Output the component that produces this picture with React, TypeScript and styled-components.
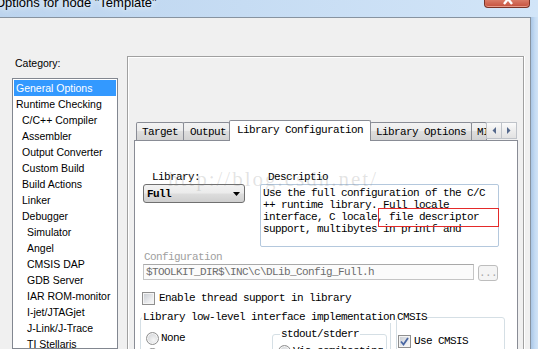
import React from "react";
import styled, { createGlobalStyle, css } from "styled-components";

const MONO = `"Liberation Mono", "DejaVu Sans Mono", monospace`;
const SANS = `"Liberation Sans", Arial, sans-serif`;
const SERIF = `"Liberation Serif", "Times New Roman", serif`;

const GlobalStyle = createGlobalStyle`
  html, body { margin: 0; padding: 0; overflow: hidden; }
  body { background: #c9def5; }
  *, *::before, *::after { box-sizing: border-box; }
`;

const Window = styled.div`
  width: 538px;
  height: 349px;
  overflow: hidden;
  display: flex;
  flex-direction: column;
  background: #c9def5;
`;

const TitleBar = styled.div`
  height: 17px;
  flex: none;
  display: flex;
  align-items: flex-start;
  overflow: hidden;
  background: linear-gradient(90deg, #bcd4ee 0%, #c6dcf3 45%, #d2e5f8 100%);
`;

const TitleText = styled.div`
  font-family: ${SANS};
  font-size: 13px;
  line-height: 15px;
  margin-top: -5px;
  margin-left: -5px;
  color: #000;
  white-space: nowrap;
  text-shadow: 0 0 5px #f4f9ff, 0 0 9px #e8f2fd;
`;

const CloseButton = styled.div`
  position: relative;
  margin-left: auto;
  margin-right: 8px;
  width: 46px;
  height: 8px;
  border: 1px solid #7a3226;
  border-top: none;
  border-radius: 0 0 4px 4px;
  background: linear-gradient(#d97a66, #c5503c);
  box-shadow: inset 0 -1px 0 #e89a88;
  overflow: hidden;
`;

const CloseGlyph = styled.svg`
  position: absolute;
  left: 18px;
  top: -7px;
`;

const Main = styled.div`
  flex: 1;
  display: flex;
  min-height: 0;
`;

const Dialog = styled.div`
  width: 531px;
  flex: none;
  display: flex;
  align-items: stretch;
  background: #f0f0f0;
  border-top: 1px solid #8793a0;
  border-right: 1px solid #8793a0;
  overflow: hidden;
`;

const FrameEdge = styled.div`
  flex: 1;
  background: linear-gradient(90deg, #a9c6e6, #c4dbf3 55%, #d0e3f7);
`;

const CategoryPane = styled.div`
  width: 118px;
  flex: none;
  padding: 39px 0 0 12px;
  display: flex;
  flex-direction: column;
`;

const CategoryLabel = styled.div`
  font-family: ${SANS};
  font-size: 10.5px;
  line-height: 13px;
  padding-left: 3px;
  color: #000;
`;

const ListBox = styled.div`
  margin-top: 8px;
  width: 106px;
  flex: 1;
  background: #fff;
  border: 1px solid #828790;
  padding: 1px;
  overflow: hidden;
`;

const ListItem = styled.div<{ $level: number; $selected?: boolean }>`
  height: 16px;
  line-height: 16px;
  font-family: ${SANS};
  font-size: 10.5px;
  white-space: nowrap;
  color: #000;
  padding-left: ${(p) => [2, 8, 13][p.$level]}px;
  ${(p) =>
    p.$selected &&
    css`
      background: #3399ff;
      color: #fff;
    `}
`;

const OptionsFrame = styled.div`
  margin: 38px 0 0 9px;
  width: 397px;
  flex: none;
  border: 1px solid #a0a0a0;
  border-bottom: none;
  box-shadow: inset 1px 1px 0 #fff, 1px 0 0 #fff;
  padding: 63px 5px 0 6px;
  display: flex;
  flex-direction: column;
`;

const TabStrip = styled.div`
  height: 20px;
  flex: none;
  display: flex;
  align-items: flex-end;
  padding-left: 2px;
  position: relative;
  z-index: 1;
`;

const Tab = styled.div<{ $active?: boolean; $w: number; $pad: number }>`
  width: ${(p) => p.$w}px;
  flex: none;
  margin-right: -1px;
  height: 18px;
  padding: 2px 0 0 ${(p) => p.$pad}px;
  font-family: ${MONO};
  font-size: 11px;
  letter-spacing: -0.6px;
  line-height: 15px;
  color: #000;
  white-space: nowrap;
  overflow: hidden;
  border: 1px solid #898c95;
  border-bottom: none;
  border-radius: 2px 2px 0 0;
  background: linear-gradient(#f3f3f3, #ececec 45%, #dedede 50%, #d2d2d2);
  ${(p) =>
    p.$active &&
    css`
      height: 21px;
      margin-bottom: -1px;
      background: #fff;
      position: relative;
      z-index: 2;
    `}
`;

const Scroller = styled.div`
  display: flex;
  height: 17px;
  margin-bottom: 1px;
  flex: none;
  position: relative;
  z-index: 3;
`;

const ScrollButton = styled.div`
  width: 16px;
  height: 17px;
  margin-right: -1px;
  border: 1px solid #bfc3c9;
  background: linear-gradient(#fbfbfb, #ededed 50%, #e2e2e2);
  display: flex;
  align-items: center;
  justify-content: center;
`;

const TabPanel = styled.div`
  flex: 1;
  position: relative;
  background: #fff;
  border: 1px solid #898c95;
  border-bottom: none;
  padding-top: 30px;
  display: flex;
  flex-direction: column;
  overflow: hidden;
`;

const MonoText = css`
  font-family: ${MONO};
  font-size: 11px;
  letter-spacing: -0.6px;
  color: #000;
  white-space: pre;
`;

const TopRow = styled.div`
  display: flex;
  margin-left: 8px;
`;

const LibraryCol = styled.div`
  width: 102px;
  flex: none;
  display: flex;
  flex-direction: column;
`;

const DescCol = styled.div`
  width: 239px;
  margin-left: 15px;
  flex: none;
  display: flex;
  flex-direction: column;
`;

const FieldLabel = styled.div<{ $indent: number; $disabled?: boolean }>`
  ${MonoText};
  line-height: 12px;
  padding-left: ${(p) => p.$indent}px;
  ${(p) =>
    p.$disabled &&
    css`
      color: #a0a0a0;
    `}
`;

const Combo = styled.div`
  ${MonoText};
  font-weight: bold;
  margin-top: 1px;
  height: 19px;
  line-height: 15px;
  padding: 2px 0 0 3px;
  border: 1px solid #707070;
  border-radius: 3px;
  background: linear-gradient(#f2f2f2, #ebebeb 48%, #dddddd 52%, #cfcfcf);
  display: flex;
  justify-content: space-between;
  align-items: flex-start;
`;

const ComboArrow = styled.svg`
  margin: 5px 4px 0 0;
`;

const DescBox = styled.div`
  ${MonoText};
  margin-top: 1px;
  height: 63px;
  line-height: 12px;
  padding: 2px 0 0 2px;
  border: 1px solid #b4c8dd;
  border-radius: 2px;
  background: #fff;
  overflow: hidden;
`;

const ConfigLabelRow = styled.div`
  margin-top: 4px;
`;

const ConfigRow = styled.div`
  display: flex;
  align-items: flex-start;
  margin: 1px 0 0 8px;
`;

const ConfigInput = styled.div`
  ${MonoText};
  color: #6d6d6d;
  width: 331px;
  height: 16px;
  line-height: 14px;
  padding-left: 2px;
  border: 1px solid #c5c5c5;
  border-top-color: #a9a9a9;
  background: #fbfbfb;
  overflow: hidden;
`;

const BrowseButton = styled.div`
  ${MonoText};
  color: #a8a8a8;
  margin: 1px 0 0 4px;
  width: 20px;
  height: 16px;
  line-height: 14px;
  text-align: center;
  border: 1px solid #bdbdbd;
  border-radius: 3px;
  background: #f4f4f4;
`;

const CheckRow = styled.div<{ $inset?: boolean }>`
  display: flex;
  align-items: center;
  gap: ${(p) => (p.$inset ? 3 : 4)}px;
  height: 13px;
  margin: ${(p) => (p.$inset ? "0" : "11px 0 0 7px")};
`;

const CheckBox = styled.div`
  width: 13px;
  height: 13px;
  flex: none;
  border: 1px solid #8f8f8f;
  box-shadow: inset 0 0 0 1px #f4f4f4;
  background: linear-gradient(135deg, #c6cad0, #eeeff1 70%, #f8f8f8);
  display: flex;
  align-items: center;
  justify-content: center;
`;

const OptionText = styled.span`
  ${MonoText};
  line-height: 13px;
`;

const GroupsRow = styled.div`
  display: flex;
  align-items: flex-start;
  margin: 6px 0 0 5px;
`;

const GroupBox = styled.fieldset<{ $w: number; $top?: number; $gap?: number }>`
  width: ${(p) => p.$w}px;
  min-width: 0;
  height: 70px;
  flex: none;
  margin: ${(p) => p.$top ?? 0}px 0 0 ${(p) => p.$gap ?? 0}px;
  padding: 0;
  border: 1px solid #d5dfe5;
  border-radius: 3px;
  display: flex;
  align-items: flex-start;
`;

const GroupLegend = styled.legend<{ $indent: number; $pad?: number }>`
  ${MonoText};
  line-height: 12px;
  padding: 0 ${(p) => p.$pad ?? 1}px;
  margin-left: ${(p) => p.$indent}px;
  background: #fff;
`;

const RadioColumn = styled.div<{ $w?: number; $pad: number; $top: number }>`
  width: ${(p) => (p.$w ? `${p.$w}px` : "auto")};
  flex: none;
  padding: ${(p) => p.$top}px 0 0 ${(p) => p.$pad}px;
  display: flex;
  flex-direction: column;
  gap: 3px;
`;

const RadioRow = styled.div`
  display: flex;
  align-items: center;
  gap: 2px;
  height: 13px;
`;

const Radio = styled.div`
  width: 13px;
  height: 13px;
  flex: none;
  border-radius: 50%;
  border: 1px solid #8f8f8f;
  box-shadow: inset 0 0 0 1px #f6f6f6;
  background: radial-gradient(circle at 60% 65%, #f6f6f6, #d7d9dc 70%);
`;

const CmsisBody = styled.div`
  padding: 12px 0 0 1px;
`;

const Watermark = styled.div`
  position: absolute;
  left: 33px;
  top: 28px;
  font-family: ${SERIF};
  font-size: 21px;
  line-height: 21px;
  letter-spacing: 2px;
  color: rgba(130, 130, 130, 0.22);
  white-space: nowrap;
  pointer-events: none;
  z-index: 5;
`;

const Annotation = styled.div`
  position: absolute;
  left: 243px;
  top: 67px;
  width: 121px;
  height: 19px;
  border: 1px solid #e42a2a;
  pointer-events: none;
  z-index: 6;
`;

const categories: Array<[string, number]> = [
  ["General Options", 0],
  ["Runtime Checking", 0],
  ["C/C++ Compiler", 1],
  ["Assembler", 1],
  ["Output Converter", 1],
  ["Custom Build", 1],
  ["Build Actions", 1],
  ["Linker", 1],
  ["Debugger", 1],
  ["Simulator", 2],
  ["Angel", 2],
  ["CMSIS DAP", 2],
  ["GDB Server", 2],
  ["IAR ROM-monitor", 2],
  ["I-jet/JTAGjet", 2],
  ["J-Link/J-Trace", 2],
  ["TI Stellaris", 2],
  ["Macraigor", 2],
];

const tabs = [
  { label: "Target", w: 48, pad: 5 },
  { label: "Output", w: 47, pad: 6 },
  { label: "Library Configuration", w: 142, pad: 7, active: true },
  { label: "Library Options", w: 102, pad: 5 },
  { label: "MISRA C:2004", w: 16, pad: 5 },
];

const descLines = [
  "Use the full configuration of the C/C",
  "++ runtime library. Full locale",
  "interface, C locale, file descriptor",
  "support, multibytes in printf and",
];

export default function App() {
  return (
    <Window>
      <GlobalStyle />
      <TitleBar>
        <TitleText>Options for node "Template"</TitleText>
        <CloseButton>
          <CloseGlyph width="10" height="12" viewBox="0 0 10 12">
            <path d="M1 1 L9 11 M9 1 L1 11" stroke="#fff" strokeWidth="2.4" fill="none" />
          </CloseGlyph>
        </CloseButton>
      </TitleBar>
      <Main>
        <Dialog>
          <CategoryPane>
            <CategoryLabel>Category:</CategoryLabel>
            <ListBox>
              {categories.map(([name, level], i) => (
                <ListItem key={name} $level={level} $selected={i === 0}>
                  {name}
                </ListItem>
              ))}
            </ListBox>
          </CategoryPane>
          <OptionsFrame>
            <TabStrip>
              {tabs.map((t) => (
                <Tab key={t.label} $w={t.w} $pad={t.pad} $active={t.active}>
                  {t.label}
                </Tab>
              ))}
              <Scroller>
                <ScrollButton>
                  <svg width="4" height="7" viewBox="0 0 4 7">
                    <polygon points="4,0 4,7 0.5,3.5" fill="#55698c" />
                  </svg>
                </ScrollButton>
                <ScrollButton>
                  <svg width="4" height="7" viewBox="0 0 4 7">
                    <polygon points="0,0 0,7 3.5,3.5" fill="#55698c" />
                  </svg>
                </ScrollButton>
              </Scroller>
            </TabStrip>
            <TabPanel>
              <TopRow>
                <LibraryCol>
                  <FieldLabel $indent={9}>Library:</FieldLabel>
                  <Combo>
                    <span>Full</span>
                    <ComboArrow width="7" height="4" viewBox="0 0 7 4">
                      <polygon points="0,0 7,0 3.5,4" fill="#000" />
                    </ComboArrow>
                  </Combo>
                </LibraryCol>
                <DescCol>
                  <FieldLabel $indent={8}>Descriptio</FieldLabel>
                  <DescBox>
                    {descLines.map((l) => (
                      <div key={l}>{l}</div>
                    ))}
                  </DescBox>
                </DescCol>
              </TopRow>
              <ConfigLabelRow>
                <FieldLabel $indent={9} $disabled>
                  Configuration
                </FieldLabel>
              </ConfigLabelRow>
              <ConfigRow>
                <ConfigInput>$TOOLKIT_DIR$\INC\c\DLib_Config_Full.h</ConfigInput>
                <BrowseButton>...</BrowseButton>
              </ConfigRow>
              <CheckRow>
                <CheckBox />
                <OptionText>Enable thread support in library</OptionText>
              </CheckRow>
              <GroupsRow>
                <GroupBox $w={251}>
                  <GroupLegend $indent={1}>Library low-level interface implementation</GroupLegend>
                  <RadioColumn $w={131} $pad={5} $top={9}>
                    <RadioRow>
                      <Radio />
                      <OptionText>None</OptionText>
                    </RadioRow>
                    <RadioRow>
                      <Radio />
                      <OptionText>Semihosted</OptionText>
                    </RadioRow>
                  </RadioColumn>
                  <GroupBox $w={115} $top={5}>
                    <GroupLegend $indent={7}>stdout/stderr</GroupLegend>
                    <RadioColumn $pad={5} $top={5}>
                      <RadioRow>
                        <Radio />
                        <OptionText>Via semihosting</OptionText>
                      </RadioRow>
                    </RadioColumn>
                  </GroupBox>
                </GroupBox>
                <GroupBox $w={109} $gap={5}>
                  <GroupLegend $indent={0} $pad={0}>CMSIS</GroupLegend>
                  <CmsisBody>
                    <CheckRow $inset>
                      <CheckBox>
                        <svg width="9" height="9" viewBox="0 0 9 9">
                          <path d="M1 4.5 L3.5 7.5 L8 1" stroke="#4a67a3" strokeWidth="1.8" fill="none" />
                        </svg>
                      </CheckBox>
                      <OptionText>Use CMSIS</OptionText>
                    </CheckRow>
                  </CmsisBody>
                </GroupBox>
              </GroupsRow>
              <Watermark>http://blog.csdn.net/</Watermark>
              <Annotation />
            </TabPanel>
          </OptionsFrame>
        </Dialog>
        <FrameEdge />
      </Main>
    </Window>
  );
}
